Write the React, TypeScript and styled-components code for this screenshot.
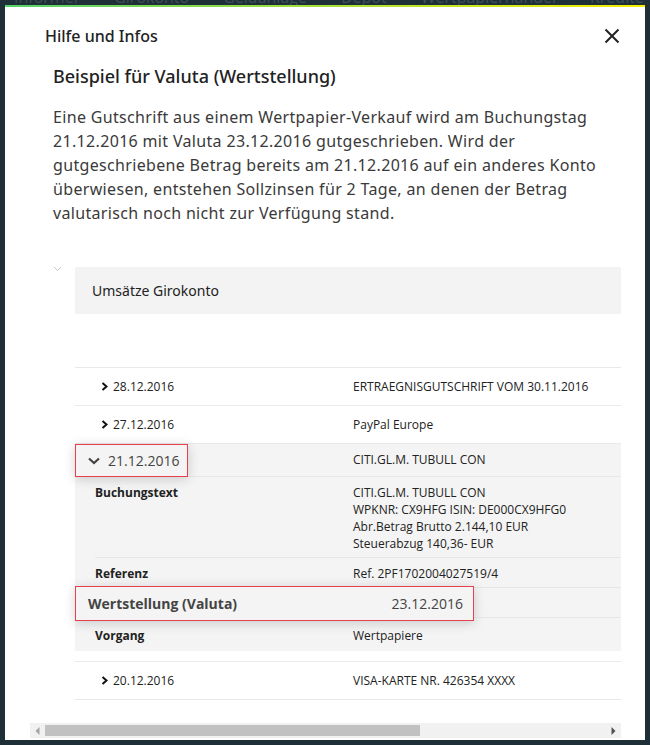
import React from "react";
import styled, { createGlobalStyle } from "styled-components";

const GlobalStyle = createGlobalStyle`
  html, body { margin: 0; padding: 0; background: #1f2f37; }
  body { width: 650px; height: 745px; overflow: hidden; }
  svg { display: block; flex: none; }
`;

const Page = styled.div`
  width: 650px;
  height: 745px;
  background: #1f2f37;
  display: flex;
  flex-direction: column;
  overflow: hidden;
`;

const NavStrip = styled.div`
  height: 5px;
  flex: none;
  overflow: hidden;
  display: flex;
  align-items: flex-end;
  gap: 34px;
  padding-left: 14px;
  font-family: "Open Sans", sans-serif;
  font-size: 16px;
  color: #3d4e57;
  white-space: nowrap;
`;

const NavItem = styled.span`
  flex: none;
  line-height: 16px;
`;

const Modal = styled.div`
  margin: 0 5px;
  height: 735px;
  flex: none;
  background: #fff;
  display: flex;
  flex-direction: column;
  font-family: "Noto Sans", sans-serif;
  color: #333;
`;

const GradientBar = styled.div`
  height: 2px;
  flex: none;
  background: linear-gradient(90deg, #55d26b 0%, #9fdf3e 45%, #f5ee00 100%);
`;

const Header = styled.div`
  height: 57px;
  flex: none;
  display: flex;
  align-items: center;
  justify-content: space-between;
  padding: 0 25px 0 40px;
`;

const HeaderTitle = styled.h1`
  margin: 0;
  font-size: 16px;
  font-weight: 500;
  color: #222;
  line-height: 22px;
`;

const CloseButton = styled.button`
  border: 0;
  background: none;
  padding: 0;
  width: 16px;
  height: 16px;
  display: flex;
  align-items: center;
  justify-content: center;
  cursor: pointer;
`;

const Body = styled.div`
  padding: 0 0 0 48px;
  flex: none;
`;

const Title = styled.h2`
  margin: 0;
  font-size: 18px;
  font-weight: 500;
  line-height: 24px;
  color: #222;
`;

const Text = styled.p`
  margin: 17px 0 0;
  width: 567px;
  font-size: 16px;
  letter-spacing: 0.33px;
  line-height: 24px;
  color: #3a3a3a;
`;

const Illustration = styled.div`
  margin: 42px 24px 2px 25px;
  flex: 1;
  min-height: 0;
  display: flex;
  flex-direction: column;
`;

const Viewport = styled.div`
  flex: 1;
  min-height: 0;
  overflow: hidden;
`;

const Canvas = styled.div`
  width: 880px;
  display: flex;
  padding-left: 22px;
  gap: 13px;
`;

const CollapseMark = styled.div`
  width: 10px;
  flex: none;
  margin-top: -2px;
`;

const Panel = styled.div`
  flex: 1;
  display: flex;
  flex-direction: column;
  font-family: "Open Sans", sans-serif;
  font-size: 12px;
  color: #222;
`;

const GroupHeader = styled.div`
  height: 47px;
  background: #f3f3f3;
  display: flex;
  align-items: center;
  padding-left: 17px;
  font-family: "Noto Sans", sans-serif;
  font-size: 14px;
  color: #222;
`;

const Spacer = styled.div`
  height: 53px;
`;

const Row = styled.div<{ $first?: boolean }>`
  height: 37px;
  display: grid;
  grid-template-columns: 252px 1fr;
  align-items: center;
  padding-left: 26px;
  border-top: ${(p) => (p.$first ? "1px solid #e9e9e9" : "none")};
  border-bottom: 1px solid #e9e9e9;
`;

const DateCell = styled.div`
  display: flex;
  align-items: center;
  gap: 5px;
`;

const Expanded = styled.div`
  background: #f4f4f4;
  display: flex;
  flex-direction: column;
`;

const ExpandedHead = styled.div`
  position: relative;
  display: grid;
  grid-template-columns: 278px 1fr;
  align-items: center;
  padding-bottom: 2px;
  box-sizing: border-box;
  height: 33px;
  border-bottom: 1px solid #e8e8e8;
`;

const Callout = styled.div<{ $left: number; $top: number; $width: number; $height: number; $spread?: boolean }>`
  position: absolute;
  left: ${(p) => p.$left}px;
  top: ${(p) => p.$top}px;
  width: ${(p) => p.$width}px;
  height: ${(p) => p.$height}px;
  box-sizing: border-box;
  padding: ${(p) => (p.$spread ? "0 10px 0 12px" : "0 0 0 12px")};
  background: #f4f4f4;
  border: 1px solid #e8404f;
  box-shadow: 0 2px 12px rgba(0, 0, 0, 0.18);
  display: flex;
  align-items: center;
  justify-content: ${(p) => (p.$spread ? "space-between" : "flex-start")};
  gap: 8px;
  font-size: 14px;
  color: #444;
  white-space: nowrap;
  z-index: 2;
`;

const CalloutLabel = styled.span`
  font-weight: 700;
`;

const Details = styled.div`
  padding-left: 20px;
  display: flex;
  flex-direction: column;
`;

const DetailRow = styled.div<{ $last?: boolean }>`
  position: relative;
  display: grid;
  grid-template-columns: 258px 1fr;
  padding: ${(p) => (p.$last ? "9px 0 7px" : "7px 0 5px")};
  line-height: 17px;
  border-bottom: ${(p) => (p.$last ? "none" : "1px solid #e6e6e6")};
`;

const LineSpacer = styled.div`
  height: 17px;
`;

const Label = styled.div`
  font-weight: 700;
`;

const Lines = styled.div`
  display: flex;
  flex-direction: column;
`;

const Gap = styled.div`
  height: 10px;
`;

const Scrollbar = styled.div`
  height: 15px;
  flex: none;
  background: #f1f1f1;
  display: flex;
`;

const ScrollButton = styled.div`
  width: 15px;
  flex: none;
  display: flex;
  align-items: center;
  justify-content: center;
`;

const ThumbTrack = styled.div`
  flex: 1;
  display: flex;
  align-items: stretch;
  padding: 2px 0;
`;

const Thumb = styled.div`
  width: 375px;
  background: #c1c1c1;
`;

const RowChevron = () => (
  <svg width="7" height="9" viewBox="0 0 7 9">
    <polyline points="1.5,1 5.5,4.5 1.5,8" fill="none" stroke="#111" strokeWidth="2" />
  </svg>
);

const rows1 = [
  { date: "28.12.2016", text: "ERTRAEGNISGUTSCHRIFT VOM 30.11.2016" },
  { date: "27.12.2016", text: "PayPal Europe" },
];

export default function App() {
  return (
    <Page>
      <GlobalStyle />
      <NavStrip>
        <NavItem>Informer</NavItem>
        <NavItem>Girokonto</NavItem>
        <NavItem>Geldanlage</NavItem>
        <NavItem>Depot</NavItem>
        <NavItem>Wertpapierhandel</NavItem>
        <NavItem>Kredite</NavItem>
      </NavStrip>
      <Modal>
        <GradientBar />
        <Header>
          <HeaderTitle>Hilfe und Infos</HeaderTitle>
          <CloseButton aria-label="Schließen">
            <svg width="16" height="16" viewBox="0 0 16 16">
              <path d="M1.5 1.5 L14.5 14.5 M14.5 1.5 L1.5 14.5" stroke="#222" strokeWidth="2" fill="none" />
            </svg>
          </CloseButton>
        </Header>
        <Body>
          <Title>Beispiel für Valuta (Wertstellung)</Title>
          <Text>
            Eine Gutschrift aus einem Wertpapier-Verkauf wird am Buchungstag 21.12.2016 mit Valuta
            23.12.2016 gutgeschrieben. Wird der gutgeschriebene Betrag bereits am 21.12.2016 auf ein
            anderes Konto überwiesen, entstehen Sollzinsen für 2 Tage, an denen der Betrag valutarisch
            noch nicht zur Verfügung stand.
          </Text>
        </Body>
        <Illustration>
          <Viewport>
            <Canvas>
              <CollapseMark>
                <svg width="11" height="7" viewBox="0 0 11 7">
                  <polyline points="0.5,0.5 5.5,5.5 10.5,0.5" fill="none" stroke="#c4c4c4" strokeWidth="1" />
                </svg>
              </CollapseMark>
              <Panel>
                <GroupHeader>Umsätze Girokonto</GroupHeader>
                <Spacer />
                {rows1.map((r, i) => (
                  <Row key={r.date} $first={i === 0}>
                    <DateCell>
                      <RowChevron />
                      {r.date}
                    </DateCell>
                    <div>{r.text}</div>
                  </Row>
                ))}
                <Expanded>
                  <ExpandedHead>
                    <Callout $left={0} $top={0} $width={113} $height={33}>
                      <svg width="12" height="8" viewBox="0 0 12 8">
                        <polyline points="1,1.5 6,6 11,1.5" fill="none" stroke="#444" strokeWidth="2.2" />
                      </svg>
                      21.12.2016
                    </Callout>
                    <div />
                    <div>CITI.GL.M. TUBULL CON</div>
                  </ExpandedHead>
                  <Details>
                    <DetailRow>
                      <Label>Buchungstext</Label>
                      <Lines>
                        <span>CITI.GL.M. TUBULL CON</span>
                        <span>WPKNR: CX9HFG ISIN: DE000CX9HFG0</span>
                        <span>Abr.Betrag Brutto 2.144,10 EUR</span>
                        <span>Steuerabzug 140,36- EUR</span>
                      </Lines>
                    </DetailRow>
                    <DetailRow>
                      <Label>Referenz</Label>
                      <div>Ref. 2PF1702004027519/4</div>
                    </DetailRow>
                    <DetailRow>
                      <LineSpacer />
                      <Callout $left={-20} $top={-2} $width={399} $height={35} $spread>
                        <CalloutLabel>Wertstellung (Valuta)</CalloutLabel>
                        <span>23.12.2016</span>
                      </Callout>
                    </DetailRow>
                    <DetailRow $last>
                      <Label>Vorgang</Label>
                      <div>Wertpapiere</div>
                    </DetailRow>
                  </Details>
                </Expanded>
                <Gap />
                <Row $first>
                  <DateCell>
                    <RowChevron />
                    20.12.2016
                  </DateCell>
                  <div>VISA-KARTE NR. 426354 XXXX</div>
                </Row>
              </Panel>
            </Canvas>
          </Viewport>
          <Scrollbar>
            <ScrollButton>
              <svg width="5" height="8" viewBox="0 0 5 8">
                <polygon points="4.5,0 0.5,4 4.5,8" fill="#a3a3a3" />
              </svg>
            </ScrollButton>
            <ThumbTrack>
              <Thumb />
            </ThumbTrack>
            <ScrollButton>
              <svg width="5" height="8" viewBox="0 0 5 8">
                <polygon points="0.5,0 4.5,4 0.5,8" fill="#505050" />
              </svg>
            </ScrollButton>
          </Scrollbar>
        </Illustration>
      </Modal>
    </Page>
  );
}
